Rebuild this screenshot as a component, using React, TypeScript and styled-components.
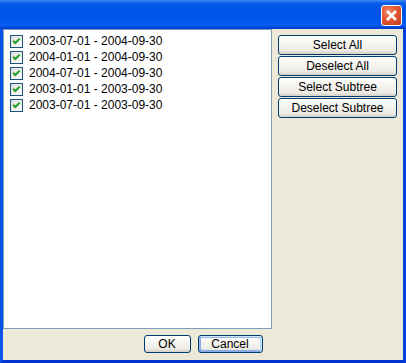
import * as React from 'react';
import { ReactElement } from 'react';
import styled, { createGlobalStyle } from 'styled-components';

const RANGES = [
  '2003-07-01 - 2004-09-30',
  '2004-01-01 - 2004-09-30',
  '2004-07-01 - 2004-09-30',
  '2003-01-01 - 2003-09-30',
  '2003-07-01 - 2003-09-30',
];

const SIDE_BUTTONS = ['Select All', 'Deselect All', 'Select Subtree', 'Deselect Subtree'];

const GlobalStyle = createGlobalStyle`
  html, body {
    margin: 0;
    padding: 0;
    background: #ece9d8;
  }
  body {
    font-family: "Liberation Sans", Arial, sans-serif;
    font-size: 12px;
    color: #000;
  }
`;

const Window = styled.div`
  width: 406px;
  height: 363px;
  box-sizing: border-box;
  display: flex;
  flex-direction: column;
  background: #0a4fe4;
  border-left: 3px solid #0b53ea;
  border-right: 3px solid #0642d6;
  border-bottom: 3px solid #0235cf;
`;

const TitleBar = styled.div`
  height: 29px;
  margin: 0 -3px;
  flex-shrink: 0;
  display: flex;
  justify-content: flex-end;
  align-items: flex-start;
  padding: 5px 4px 0 0;
  box-sizing: border-box;
  background: linear-gradient(
    180deg,
    #3d8bf7 0,
    #0a5fe9 3px,
    #0055ea 6px,
    #0053e7 14px,
    #0057ef 22px,
    #0b61f6 25px,
    #0048dc 27px,
    #003dd0 29px
  );
`;

const CloseButton = styled.div`
  width: 21px;
  height: 21px;
  box-sizing: border-box;
  border: 1px solid #fff;
  border-radius: 3px;
  background: radial-gradient(circle at 35% 30%, #f0886a 0, #e35b33 40%, #c4391c 100%);
  display: flex;
  align-items: center;
  justify-content: center;
`;

const Body = styled.div`
  flex: 1;
  display: flex;
  flex-direction: column;
  background: #ece9d8;
`;

const Main = styled.div`
  flex: 1;
  display: flex;
`;

const ListBox = styled.div`
  width: 269px;
  height: 300px;
  box-sizing: border-box;
  border: 1px solid #7f9db9;
  background: #fff;
  padding: 5px 0 0 6px;
  display: flex;
  flex-direction: column;
`;

const Row = styled.div`
  height: 16px;
  display: flex;
  align-items: flex-start;
  gap: 6px;
`;

const RowLabel = styled.span`
  line-height: 13px;
  white-space: nowrap;
`;

const SidePanel = styled.div`
  flex: 1;
  display: flex;
  flex-direction: column;
  gap: 1px;
  padding: 6px 6px 0 6px;
`;

const XpButton = styled.button<{ $focused?: boolean; $width?: number }>`
  width: ${(p) => (p.$width ? `${p.$width}px` : '100%')};
  height: ${(p) => (p.$width ? 18 : 20)}px;
  padding: 0;
  margin: 0;
  box-sizing: border-box;
  border: 1px solid #003c74;
  border-radius: 3px;
  font-family: "Liberation Sans", Arial, sans-serif;
  font-size: 12px;
  color: #000;
  background: linear-gradient(180deg, #fff 0, #f4f3ee 45%, #ecebe6 80%, #d6d0c5 100%);
  box-shadow: ${(p) => (p.$focused
    ? 'inset -1px 1px #cee7ff, inset 1px 2px #98b8ea, inset -2px 2px #bcd4f6, inset 1px -1px #89ade4, inset 2px -2px #89ade4'
    : 'none')};
`;

const Footer = styled.div`
  height: 31px;
  display: flex;
  justify-content: center;
  align-items: flex-start;
  gap: 7px;
  padding-top: 6px;
  box-sizing: border-box;
`;

const CheckBox = (): ReactElement => (
  <svg width="13" height="13" viewBox="0 0 13 13" style={{ flexShrink: 0 }}>
    <defs>
      <linearGradient id="cbFill" x1="0" y1="0" x2="1" y2="1">
        <stop offset="0" stopColor="#dcdcd7" />
        <stop offset="1" stopColor="#ffffff" />
      </linearGradient>
    </defs>
    <rect x="0.5" y="0.5" width="12" height="12" fill="url(#cbFill)" stroke="#1c5180" />
    <path d="M3.2 5.8 L5.3 8 L9.8 3.6" fill="none" stroke="#21a121" strokeWidth="2" />
  </svg>
);

const App: React.FC = (): ReactElement => (
  <>
    <GlobalStyle />
    <Window>
      <TitleBar>
        <CloseButton>
          <svg width="13" height="13" viewBox="0 0 13 13">
            <path d="M2 2 L11 11 M11 2 L2 11" stroke="#fff" strokeWidth="2.6" />
          </svg>
        </CloseButton>
      </TitleBar>
      <Body>
        <Main>
          <ListBox>
            {RANGES.map((range, index) => (
              <Row key={index}>
                <CheckBox />
                <RowLabel>{range}</RowLabel>
              </Row>
            ))}
          </ListBox>
          <SidePanel>
            {SIDE_BUTTONS.map((label) => (
              <XpButton key={label}>{label}</XpButton>
            ))}
          </SidePanel>
        </Main>
        <Footer>
          <XpButton $width={47}>OK</XpButton>
          <XpButton $width={65} $focused>Cancel</XpButton>
        </Footer>
      </Body>
    </Window>
  </>
);

export default App;
